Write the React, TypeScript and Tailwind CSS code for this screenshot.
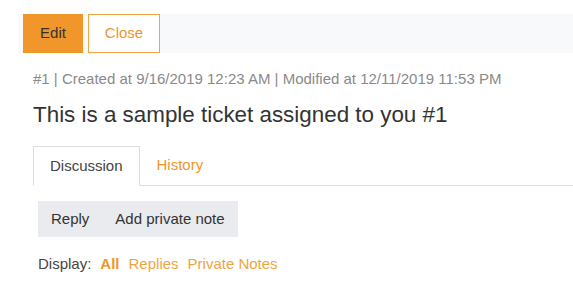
export default function App() {
  return (
    <div className="min-h-screen bg-white pt-[14px] font-['Liberation_Sans',Arial,sans-serif] text-[#333]">
      {/* Toolbar */}
      <div className="ml-[18px] flex h-[39px] gap-[5px] bg-[#f8f9fa] pl-[5px]">
        <button className="h-full w-[60px] bg-[#f0962b] text-[15px] text-[#333]">Edit</button>
        <button className="h-full w-[72px] border border-[#f0a441] bg-white text-[15px] text-[#f0962b]">Close</button>
      </div>

      <div className="pl-[33px]">
        <div className="mt-[16px] text-[15px] leading-[20px] text-[#8a8a8a]">
          #1 | Created at 9/16/2019 12:23 AM | Modified at 12/11/2019 11:53 PM
        </div>
        <h1 className="mt-[11px] text-[22.4px] leading-[30px] text-[#333]">
          This is a sample ticket assigned to you #1
        </h1>

        {/* Tabs */}
        <div className="mt-[16px] flex border-b border-[#dedede]">
          <div className="-mb-px flex h-[40px] items-center border border-b-white border-[#dedede] bg-white px-[16px] text-[15px] text-[#444]">
            Discussion
          </div>
          <div className="flex h-[39px] items-center px-[17px] text-[15px] text-[#f0962b]">History</div>
        </div>

        {/* Actions */}
        <div className="ml-[5px] mt-[15px] flex h-[36px] w-fit items-center bg-[#e9ebee] text-[15px] text-[#333]">
          <button className="h-full px-[13px]">Reply</button>
          <button className="h-full px-[13px]">Add private note</button>
        </div>

        <div className="ml-[5px] mt-[17px] flex items-center gap-[9px] text-[15px] leading-[20px]">
          <span className="text-[#444]">Display:</span>
          <span className="font-bold text-[#f0962b]">All</span>
          <span className="text-[#f0a441]">Replies</span>
          <span className="text-[#f0a441]">Private Notes</span>
        </div>
      </div>
    </div>
  )
}
